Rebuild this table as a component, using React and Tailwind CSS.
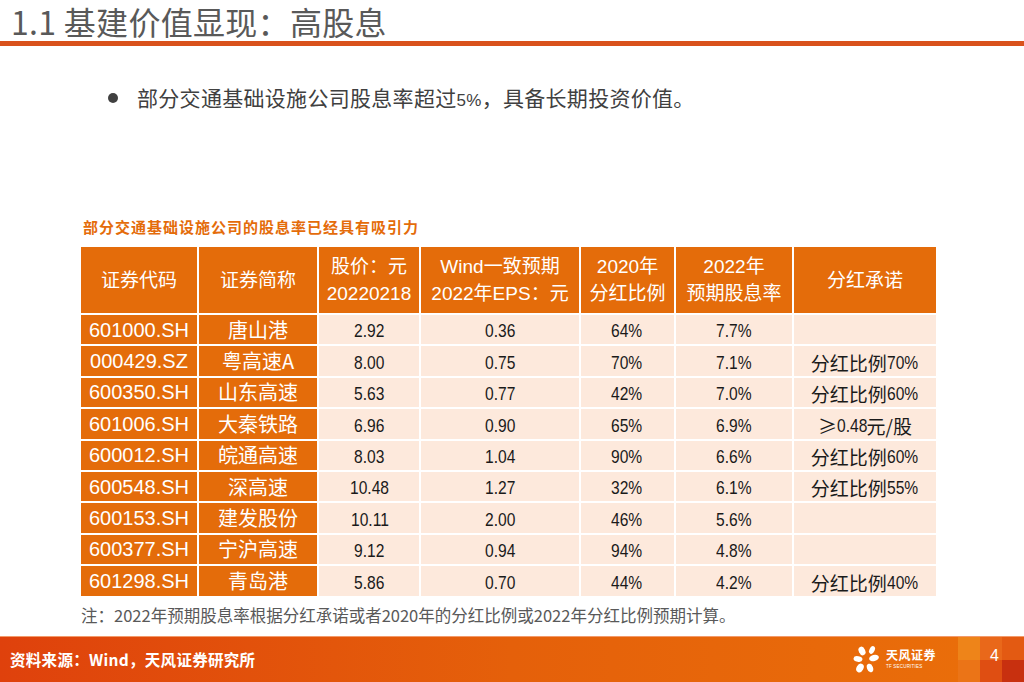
import React from "react";

const CJK = '"Noto Sans CJK SC", sans-serif';
const LIB = '"Liberation Sans", "Noto Sans CJK SC", sans-serif';

const rows = [
  ["601000.SH", "唐山港", "2.92", "0.36", "64%", "7.7%", ""],
  ["000429.SZ", "粤高速A", "8.00", "0.75", "70%", "7.1%", "分红比例70%"],
  ["600350.SH", "山东高速", "5.63", "0.77", "42%", "7.0%", "分红比例60%"],
  ["601006.SH", "大秦铁路", "6.96", "0.90", "65%", "6.9%", "≥0.48元/股"],
  ["600012.SH", "皖通高速", "8.03", "1.04", "90%", "6.6%", "分红比例60%"],
  ["600548.SH", "深高速", "10.48", "1.27", "32%", "6.1%", "分红比例55%"],
  ["600153.SH", "建发股份", "10.11", "2.00", "46%", "5.6%", ""],
  ["600377.SH", "宁沪高速", "9.12", "0.94", "94%", "4.8%", ""],
  ["601298.SH", "青岛港", "5.86", "0.70", "44%", "4.2%", "分红比例40%"],
];

const headers = [
  ["证券代码"],
  ["证券简称"],
  ["股价：元", "20220218"],
  ["Wind一致预期", "2022年EPS：元"],
  ["2020年", "分红比例"],
  ["2022年", "预期股息率"],
  ["分红承诺"],
];

function Narrow({ text }) {
  const parts = text.split(/([0-9.%]+)/).filter((p) => p !== "");
  return (
    <span className="inline-flex items-center">
      {parts.map((p, i) =>
        /^[0-9.%]+$/.test(p) ? (
          <span
            key={i}
            className="inline-block whitespace-nowrap"
            style={{
              fontFamily: '"Liberation Sans", sans-serif',
              transform: "scaleX(0.82)",
              transformOrigin: "left center",
              marginRight: `${-0.18 * p.length * 10.5}px`,
            }}
          >
            {p}
          </span>
        ) : (
          <span key={i} style={{ fontFamily: CJK }}>
            {p}
          </span>
        )
      )}
    </span>
  );
}

function Logo() {
  return (
    <div className="flex items-center gap-[3px]">
      <svg width="30" height="28" viewBox="0 0 30 28">
        <g fill="#fff">
          <ellipse cx="9" cy="5" rx="3.2" ry="4.5" transform="rotate(-25 9 5)" />
          <ellipse cx="19" cy="4" rx="2.6" ry="4" transform="rotate(25 19 4)" />
          <ellipse cx="5" cy="13" rx="4.5" ry="2.8" transform="rotate(10 5 13)" />
          <ellipse cx="21" cy="12" rx="5" ry="3" transform="rotate(-15 21 12)" />
          <ellipse cx="7" cy="22" rx="3.4" ry="4.6" transform="rotate(30 7 22)" />
          <ellipse cx="17" cy="22" rx="3" ry="4.4" transform="rotate(-20 17 22)" />
        </g>
      </svg>
      <div className="flex flex-col leading-none">
        <span
          className="text-[12px] font-bold text-white tracking-[0.5px]"
          style={{ fontFamily: CJK }}
        >
          天风证券
        </span>
        <span
          className="text-[4.5px] text-white mt-[4px] tracking-[0.2px]"
          style={{ fontFamily: '"Liberation Sans", sans-serif' }}
        >
          TF SECURITIES
        </span>
      </div>
    </div>
  );
}

export default function App() {
  return (
    <div
      className="relative w-[1024px] h-[682px] bg-white overflow-hidden flex flex-col"
      style={{ fontFamily: CJK }}
    >
      {/* Title */}
      <div className="h-[41px] flex items-center pl-[11px]">
        <span className="text-[32px] leading-[38px] text-[#595959] tracking-[0.3px]">
          1.1 基建价值显现：高股息
        </span>
      </div>
      <div className="h-[5px] bg-[#d9521c] w-full" />

      {/* Bullet */}
      <div className="flex items-center pl-[108px] mt-[40px] h-[24px]">
        <div className="w-[10px] h-[10px] rounded-full bg-[#404040]" />
        <span className="ml-[19px] text-[21px] leading-none text-[#404040] tracking-[0.3px] whitespace-nowrap">
          部分交通基础设施公司股息率超过
          <span style={{ fontFamily: '"Liberation Sans", sans-serif' }} className="text-[17px]">
            5%
          </span>
          ，具备长期投资价值。
        </span>
      </div>

      {/* Caption */}
      <div className="pl-[83px] mt-[106px] h-[20px] flex items-center">
        <span className="text-[15px] font-bold text-[#e46c0a] tracking-[1px] leading-none">
          部分交通基础设施公司的股息率已经具有吸引力
        </span>
      </div>

      {/* Table */}
      <div className="ml-[81px] mt-[11px] w-[855px] bg-white">
        <div className="grid grid-cols-[116px_118px_100px_158px_93px_116px_142px] gap-[2px]">
          {headers.map((h, i) => (
            <div
              key={i}
              className="h-[66px] bg-[#e46c0a] text-white flex flex-col items-center justify-center text-[19px] leading-[27px]"
              style={{ fontFamily: LIB }}
            >
              {h.map((l, j) => (
                <span key={j} className="whitespace-nowrap">
                  {l}
                </span>
              ))}
            </div>
          ))}
          {rows.map((r, ri) =>
            r.map((c, ci) => {
              const orange = ci < 2;
              return (
                <div
                  key={ri + "-" + ci}
                  className={
                    "h-[29.4px] flex items-center justify-center whitespace-nowrap " +
                    (orange
                      ? "bg-[#e46c0a] text-white text-[20px]"
                      : "bg-[#fde9dc] text-[#1a1a1a] text-[19px] pt-[4px]")
                  }
                  style={{ fontFamily: ci === 0 ? LIB : CJK }}
                >
                  {orange ? c : <Narrow text={c} />}
                </div>
              );
            })
          )}
        </div>
      </div>

      {/* Note */}
      <div className="pl-[81px] mt-[10px] h-[20px] flex items-center">
        <span className="text-[16.5px] text-[#595959] leading-none whitespace-nowrap">
          注：2022年预期股息率根据分红承诺或者2020年的分红比例或2022年分红比例预期计算。
        </span>
      </div>

      {/* Footer */}
      <div className="mt-auto h-[46px] w-full flex items-stretch border-t border-[#f39a6a] bg-gradient-to-r from-[#df410c] via-[#e5600a] to-[#ea6f0a]">
        <div className="flex-1 flex items-center pl-[10px]">
          <span className="text-[15.5px] font-bold text-white tracking-[0.3px]">
            资料来源：Wind，天风证券研究所
          </span>
        </div>
        <div className="flex items-center pr-[22px]">
          <Logo />
        </div>
        <div className="relative w-[66px] grid grid-cols-3 grid-rows-2">
          <div className="bg-[#ee8419]" />
          <div className="bg-[#e9681a]" />
          <div className="bg-[#e35a12]" />
          <div className="bg-[#eb7417]" />
          <div className="bg-[#df4e12]" />
          <div className="bg-[#c8300f]" />
          <span
            className="absolute left-[32px] top-[11px] text-[16px] text-white leading-none"
            style={{ fontFamily: '"Liberation Sans", sans-serif' }}
          >
            4
          </span>
        </div>
      </div>
    </div>
  );
}
